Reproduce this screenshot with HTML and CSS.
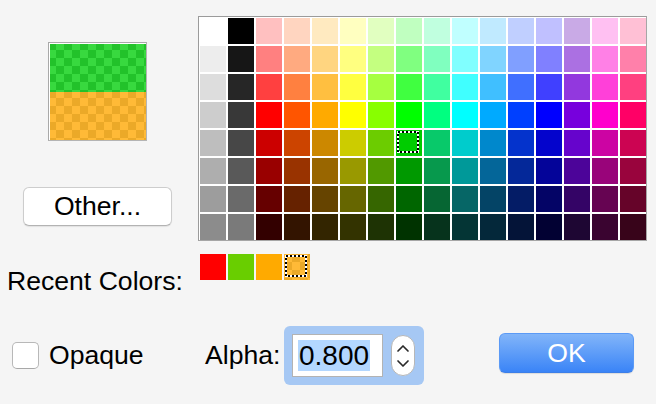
FILE: index.html
```html
<!DOCTYPE html>
<html>
<head>
<meta charset="utf-8">
<link rel="stylesheet" href="styles.css">
</head>
<body>
<div class="dialog">
  <div class="top">
    <div class="left">
      <div class="preview"><div class="half green"></div><div class="half orange"></div></div>
      <button class="btn other">Other...</button>
    </div>
    <div class="palette">
      <div class="cell" style="background:#FFFFFF"></div><div class="cell" style="background:#000000"></div><div class="cell" style="background:#FFC0C0"></div><div class="cell" style="background:#FFD5C0"></div><div class="cell" style="background:#FFEAC0"></div><div class="cell" style="background:#FFFFC0"></div><div class="cell" style="background:#E1FFC0"></div><div class="cell" style="background:#C0FFC0"></div><div class="cell" style="background:#C0FFDF"></div><div class="cell" style="background:#C0FFFF"></div><div class="cell" style="background:#C0EAFF"></div><div class="cell" style="background:#C0CFFF"></div><div class="cell" style="background:#C0C0FF"></div><div class="cell" style="background:#C9AAE6"></div><div class="cell" style="background:#FFC0F2"></div><div class="cell" style="background:#FFC0D5"></div>
      <div class="cell" style="background:#EDEDED"></div><div class="cell" style="background:#161616"></div><div class="cell" style="background:#FF8080"></div><div class="cell" style="background:#FFAA80"></div><div class="cell" style="background:#FFD580"></div><div class="cell" style="background:#FFFF80"></div><div class="cell" style="background:#C4FF80"></div><div class="cell" style="background:#80FF80"></div><div class="cell" style="background:#80FFBF"></div><div class="cell" style="background:#80FFFF"></div><div class="cell" style="background:#80D4FF"></div><div class="cell" style="background:#809FFF"></div><div class="cell" style="background:#8080FF"></div><div class="cell" style="background:#AB70E2"></div><div class="cell" style="background:#FF80E6"></div><div class="cell" style="background:#FF80AA"></div>
      <div class="cell" style="background:#DDDDDD"></div><div class="cell" style="background:#262626"></div><div class="cell" style="background:#FF4040"></div><div class="cell" style="background:#FF8040"></div><div class="cell" style="background:#FFBF40"></div><div class="cell" style="background:#FFFF40"></div><div class="cell" style="background:#A6FF40"></div><div class="cell" style="background:#40FF40"></div><div class="cell" style="background:#40FFA0"></div><div class="cell" style="background:#40FFFF"></div><div class="cell" style="background:#40BFFF"></div><div class="cell" style="background:#406FFF"></div><div class="cell" style="background:#4040FF"></div><div class="cell" style="background:#9238DE"></div><div class="cell" style="background:#FF40D9"></div><div class="cell" style="background:#FF4080"></div>
      <div class="cell" style="background:#CDCDCD"></div><div class="cell" style="background:#383838"></div><div class="cell" style="background:#FF0000"></div><div class="cell" style="background:#FF5500"></div><div class="cell" style="background:#FFAA00"></div><div class="cell" style="background:#FFFF00"></div><div class="cell" style="background:#88FF00"></div><div class="cell" style="background:#00FF00"></div><div class="cell" style="background:#00FF80"></div><div class="cell" style="background:#00FFFF"></div><div class="cell" style="background:#00AAFF"></div><div class="cell" style="background:#0040FF"></div><div class="cell" style="background:#0000FF"></div><div class="cell" style="background:#7700DD"></div><div class="cell" style="background:#FF00CC"></div><div class="cell" style="background:#FF0066"></div>
      <div class="cell" style="background:#BEBEBE"></div><div class="cell" style="background:#474747"></div><div class="cell" style="background:#CC0000"></div><div class="cell" style="background:#CC4400"></div><div class="cell" style="background:#CC8800"></div><div class="cell" style="background:#CCCC00"></div><div class="cell" style="background:#6CCC00"></div><div class="cell selected" style="background:#00CC00"><svg class="ants" width="26" height="26" viewBox="0 0 26 26"><rect x="2" y="2" width="20" height="20" fill="none" stroke="#fff" stroke-width="2"/><rect x="2" y="2" width="20" height="20" fill="none" stroke="#000" stroke-width="2" stroke-dasharray="2 2"/></svg></div><div class="cell" style="background:#08C96A"></div><div class="cell" style="background:#00CCCC"></div><div class="cell" style="background:#0088CC"></div><div class="cell" style="background:#0433CC"></div><div class="cell" style="background:#0404CC"></div><div class="cell" style="background:#6604CC"></div><div class="cell" style="background:#CC04A3"></div><div class="cell" style="background:#CC0452"></div>
      <div class="cell" style="background:#AEAEAE"></div><div class="cell" style="background:#595959"></div><div class="cell" style="background:#990000"></div><div class="cell" style="background:#993300"></div><div class="cell" style="background:#996600"></div><div class="cell" style="background:#999900"></div><div class="cell" style="background:#519900"></div><div class="cell" style="background:#009900"></div><div class="cell" style="background:#07994D"></div><div class="cell" style="background:#009999"></div><div class="cell" style="background:#046699"></div><div class="cell" style="background:#042899"></div><div class="cell" style="background:#040499"></div><div class="cell" style="background:#4C0499"></div><div class="cell" style="background:#99047A"></div><div class="cell" style="background:#99043D"></div>
      <div class="cell" style="background:#9D9D9D"></div><div class="cell" style="background:#6A6A6A"></div><div class="cell" style="background:#660000"></div><div class="cell" style="background:#662200"></div><div class="cell" style="background:#664400"></div><div class="cell" style="background:#666600"></div><div class="cell" style="background:#366600"></div><div class="cell" style="background:#006600"></div><div class="cell" style="background:#066633"></div><div class="cell" style="background:#066666"></div><div class="cell" style="background:#044466"></div><div class="cell" style="background:#041C66"></div><div class="cell" style="background:#040466"></div><div class="cell" style="background:#340466"></div><div class="cell" style="background:#660452"></div><div class="cell" style="background:#660429"></div>
      <div class="cell" style="background:#8C8C8C"></div><div class="cell" style="background:#7A7A7A"></div><div class="cell" style="background:#330000"></div><div class="cell" style="background:#331400"></div><div class="cell" style="background:#332500"></div><div class="cell" style="background:#333300"></div><div class="cell" style="background:#1E3304"></div><div class="cell" style="background:#003300"></div><div class="cell" style="background:#06331C"></div><div class="cell" style="background:#043535"></div><div class="cell" style="background:#04283A"></div><div class="cell" style="background:#041438"></div><div class="cell" style="background:#020133"></div><div class="cell" style="background:#1E0633"></div><div class="cell" style="background:#3A0430"></div><div class="cell" style="background:#38041A"></div>
    </div>
  </div>
  <div class="recent">
    <div class="recent-label">Recent Colors:</div>
    <div class="swatches">
      <div class="cell" style="background:#FF0000"></div>
      <div class="cell" style="background:#69CE00"></div>
      <div class="cell" style="background:#FFAA00"></div>
      <div class="cell checker-orange"><svg class="ants" width="26" height="26" viewBox="0 0 26 26"><rect x="2" y="2" width="20" height="20" fill="none" stroke="#fff" stroke-width="2"/><rect x="2" y="2" width="20" height="20" fill="none" stroke="#000" stroke-width="2" stroke-dasharray="2 2"/></svg></div>
    </div>
  </div>
  <div class="bottom">
    <span class="checkbox"></span>
    <span class="opaque-label">Opaque</span>
    <span class="alpha-label">Alpha:</span>
    <div class="focus-ring">
      <div class="field"><span class="sel">0.800</span></div>
      <div class="stepper"><svg width="22" height="39" viewBox="0 0 22 39"><path d="M6 15 L11 10 L16 15" fill="none" stroke="#2a2a2a" stroke-width="1.7" stroke-linecap="round" stroke-linejoin="round"/><path d="M6 25 L11 30 L16 25" fill="none" stroke="#2a2a2a" stroke-width="1.7" stroke-linecap="round" stroke-linejoin="round"/></svg></div>
    </div>
    <button class="btn ok">OK</button>
  </div>
</div>
</body>
</html>
```

FILE: styles.css
```css
html, body {
  margin: 0;
  padding: 0;
}
body {
  background: #f5f5f5;
  font-family: "Liberation Sans", Arial, sans-serif;
  font-size: 26.6px;
  color: #000;
  width: 656px;
  height: 404px;
  overflow: hidden;
}
.dialog {
  display: flex;
  flex-direction: column;
}
.top {
  display: flex;
  padding-top: 16px;
}
.left {
  width: 198px;
  flex-shrink: 0;
  display: flex;
  flex-direction: column;
  align-items: flex-start;
}
.preview {
  margin-top: 26px;
  margin-left: 48px;
  width: 96px;
  height: 96px;
  border: 1px solid #a9a9a9;
  border-right-color: #b4b4b4;
  border-bottom-color: #b4b4b4;
  padding: 1px 0 0 1px;
  background: #fff;
  display: flex;
  flex-direction: column;
}
.half {
  height: 48px;
  background-size: 16px 16px;
  background-position: -2px -2px;
}
.green {
  background-color: #38d93f;
  background-image: conic-gradient(#38d93f 0 25%, #22c22a 0 50%, #38d93f 0 75%, #22c22a 0);
}
.orange {
  background-color: #ffba37;
  background-image: conic-gradient(#ffba37 0 25%, #eba928 0 50%, #ffba37 0 75%, #eba928 0);
}
.btn {
  font-family: "Liberation Sans", Arial, sans-serif;
  font-size: 26.6px;
  padding: 0;
  margin: 0;
  display: flex;
  align-items: center;
  justify-content: center;
  box-sizing: border-box;
}
.other {
  margin-top: 46px;
  margin-left: 23px;
  width: 149px;
  height: 39px;
  background: #fff;
  color: #000;
  border: 1px solid #cdcdcd;
  border-bottom-color: #b3b3b3;
  border-radius: 6px;
  box-shadow: 0 1px 1px rgba(0, 0, 0, 0.08);
}
.palette {
  display: grid;
  grid-template-columns: repeat(16, 26px);
  grid-auto-rows: 26px;
  gap: 2px;
  padding: 1px 0 0 1px;
  background: #fff;
  border: 1px solid #a6a6a6;
  border-top-color: #9b9b9b;
  border-left-color: #9b9b9b;
  align-self: flex-start;
}
.cell {
  width: 26px;
  height: 26px;
}
.ants {
  display: block;
}
.recent {
  display: flex;
  align-items: flex-start;
  margin-top: 13px;
}
.recent-label {
  width: 200px;
  flex-shrink: 0;
  box-sizing: border-box;
  padding-left: 7px;
  margin-top: 12px;
  line-height: 30px;
  white-space: nowrap;
}
.swatches {
  display: flex;
  gap: 2px;
}
.checker-orange {
  background-color: #ffba37;
  background-image: conic-gradient(#eba928 0 25%, #ffba37 0 50%, #eba928 0 75%, #ffba37 0);
  background-size: 16px 16px;
  background-position: 0 0;
}
.bottom {
  display: flex;
  align-items: center;
  margin-top: 30px;
  padding-left: 12px;
  height: 59px;
}
.checkbox {
  width: 27px;
  height: 27px;
  box-sizing: border-box;
  background: #fff;
  border: 1px solid #b8b8b8;
  border-bottom-color: #a8a8a8;
  border-radius: 5px;
  margin-right: 10px;
  flex-shrink: 0;
}
.opaque-label {
  width: 156px;
  flex-shrink: 0;
  white-space: nowrap;
}
.alpha-label {
  width: 79px;
  flex-shrink: 0;
  white-space: nowrap;
}
.focus-ring {
  width: 140px;
  height: 59px;
  flex-shrink: 0;
  box-sizing: border-box;
  padding: 8px 9px 8px 8px;
  background: #a6c8f4;
  border-radius: 6px;
  display: flex;
  align-items: center;
  gap: 8px;
}
.field {
  width: 91px;
  height: 43px;
  box-sizing: border-box;
  background: #fff;
  border: 1px solid #b3b3b3;
  display: flex;
  align-items: center;
  padding-left: 5px;
}
.sel {
  background: #b3d7ff;
  font-size: 28px;
  line-height: 31px;
  padding: 0 1px;
}
.stepper {
  width: 24px;
  height: 41px;
  box-sizing: border-box;
  background: #fff;
  border: 1px solid #b7b7b7;
  border-radius: 12px;
  display: flex;
}
.stepper svg {
  display: block;
}
.ok {
  margin-left: 75px;
  margin-bottom: 5px;
  width: 135px;
  height: 40px;
  flex-shrink: 0;
  color: #fff;
  border: 1px solid #5b9af6;
  border-bottom-color: #3d7fe8;
  border-radius: 6px;
  background: linear-gradient(to bottom, #82b5f9, #3a84f7);
  box-shadow: 0 1px 1px rgba(0, 0, 0, 0.1);
}
```
